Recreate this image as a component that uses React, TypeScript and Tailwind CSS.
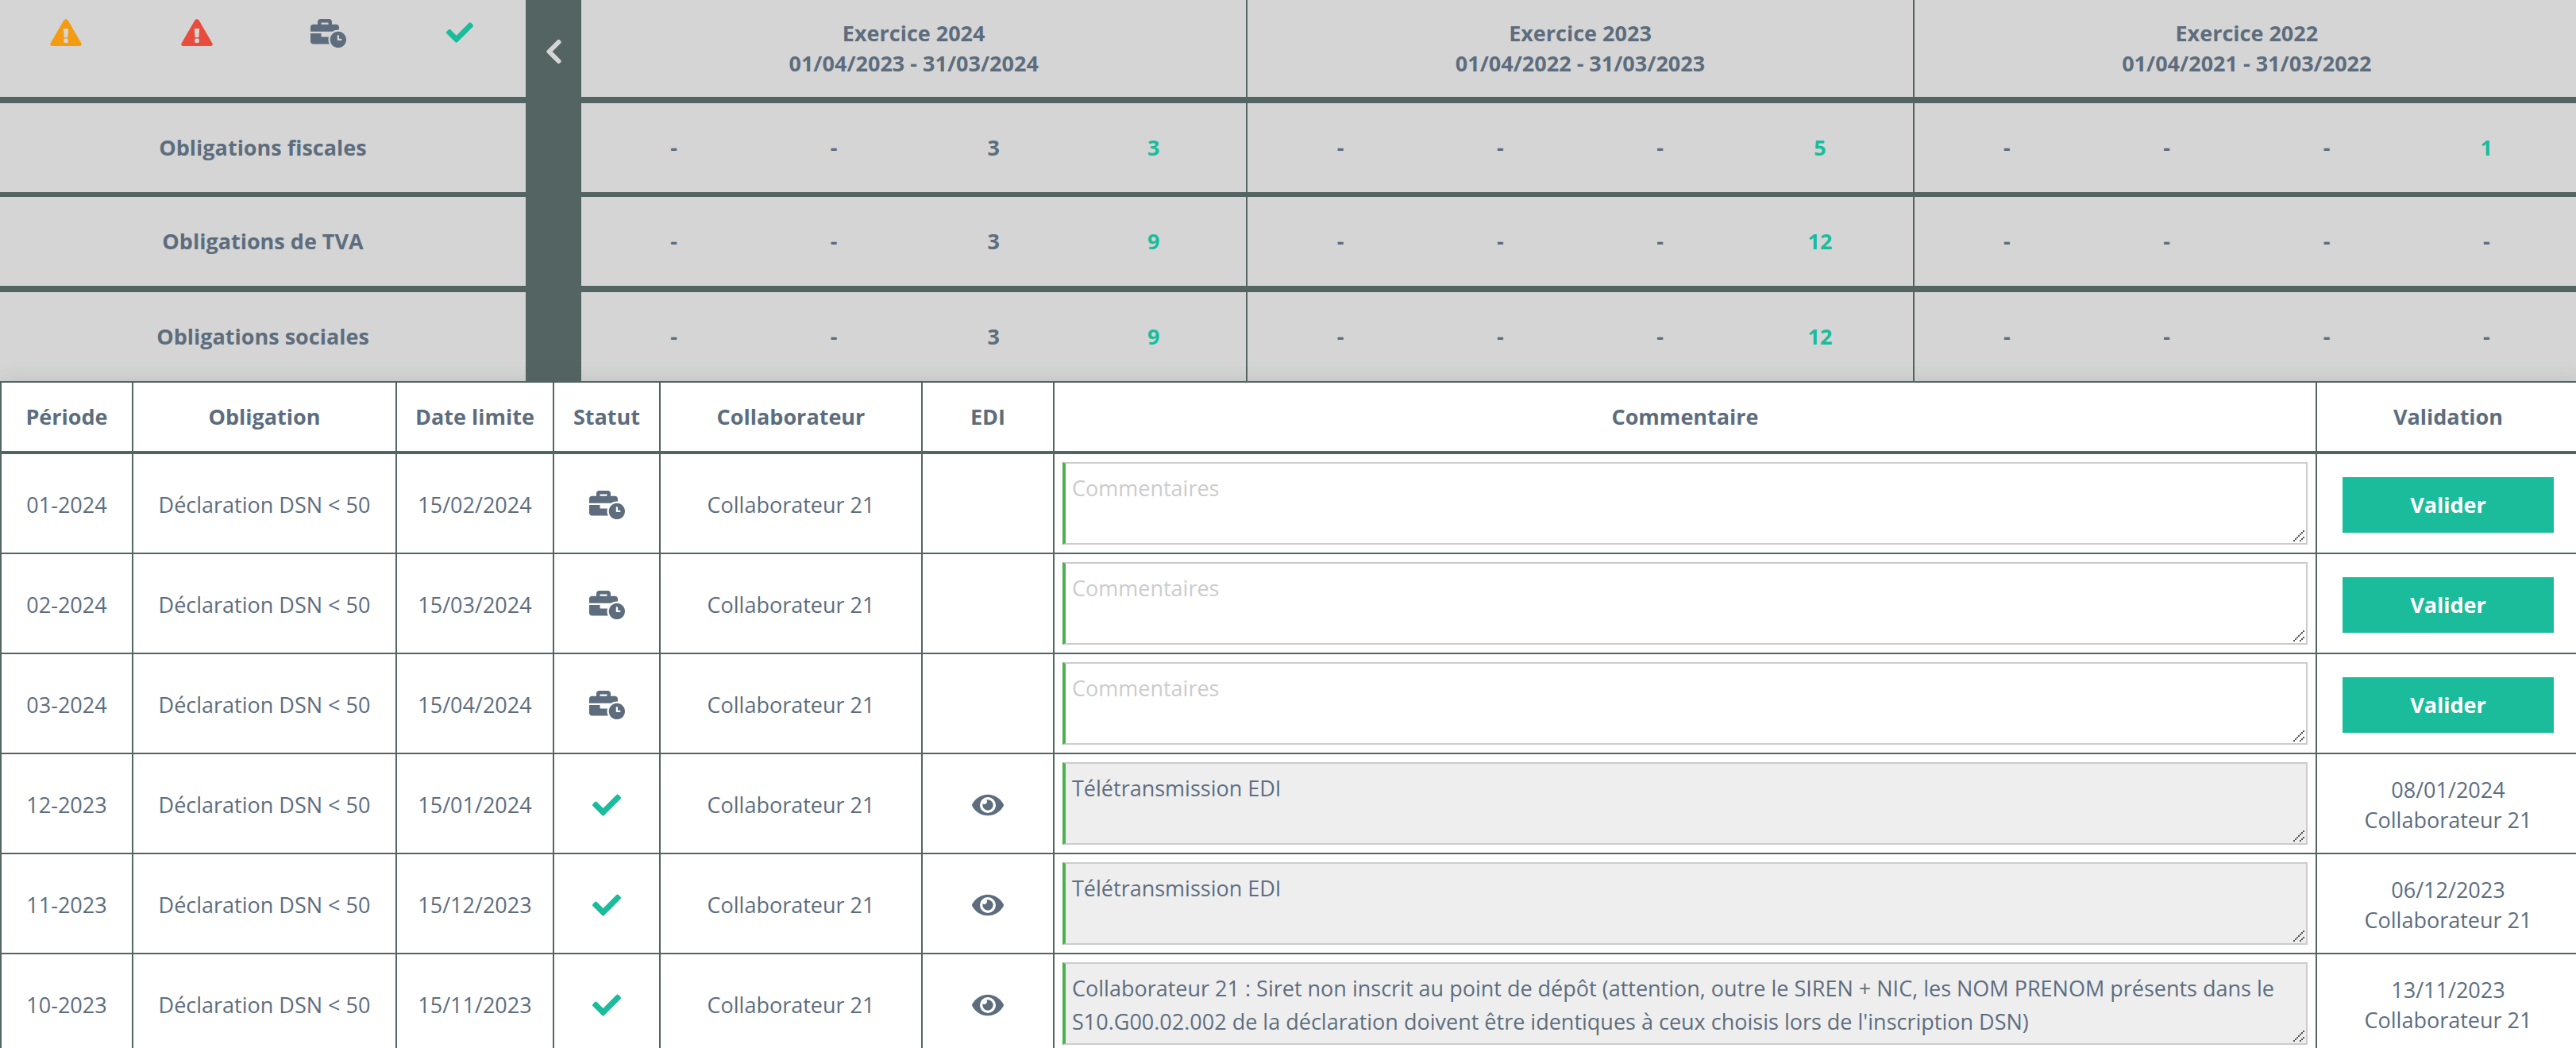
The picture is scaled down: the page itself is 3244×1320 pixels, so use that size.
import React, { useState } from 'react';
import { FaBusinessTime, FaCheck, FaEye } from 'react-icons/fa';

const EXERCICES = [
  { annee: '2024', dates: '01/04/2023 - 31/03/2024' },
  { annee: '2023', dates: '01/04/2022 - 31/03/2023' },
  { annee: '2022', dates: '01/04/2021 - 31/03/2022' }
];

// counters per exercice: retard, urgent, en cours, fait
const SYNTHESE = [
  {
    label: 'Obligations fiscales',
    border: 'border-b-6',
    counts: [['-', '-', '3', '3'], ['-', '-', '-', '5'], ['-', '-', '-', '1']]
  },
  {
    label: 'Obligations de TVA',
    border: 'border-b-8',
    counts: [['-', '-', '3', '9'], ['-', '-', '-', '12'], ['-', '-', '-', '-']]
  },
  {
    label: 'Obligations sociales',
    border: '',
    counts: [['-', '-', '3', '9'], ['-', '-', '-', '12'], ['-', '-', '-', '-']]
  }
];

interface Declaration {
  periode: string;
  limite: string;
  commentaire?: string;
  valideLe?: string;
}

const DECLARATIONS: Declaration[] = [
  { periode: '01-2024', limite: '15/02/2024' },
  { periode: '02-2024', limite: '15/03/2024' },
  { periode: '03-2024', limite: '15/04/2024' },
  { periode: '12-2023', limite: '15/01/2024', commentaire: 'Télétransmission EDI', valideLe: '08/01/2024' },
  { periode: '11-2023', limite: '15/12/2023', commentaire: 'Télétransmission EDI', valideLe: '06/12/2023' },
  {
    periode: '10-2023',
    limite: '15/11/2023',
    commentaire: "Collaborateur 21 : Siret non inscrit au point de dépôt (attention, outre le SIREN + NIC, les NOM PRENOM présents dans le S10.G00.02.002 de la déclaration doivent être identiques à ceux choisis lors de l'inscription DSN)",
    valideLe: '13/11/2023'
  }
];

const COLLABORATEUR = 'Collaborateur 21';

const Warning = ({ className }: { className: string }) => (
  <svg className={`w-10 h-[34px] ${className}`} viewBox="0 0 40 34" fill="currentColor" fillRule="evenodd">
    <path d="M17.4 1.6Q20 -1.6 22.6 1.6L39.4 30.6Q40.6 34 37.4 34H2.6Q-.6 34 .6 30.6ZM16.8 12L17.6 23H22.4L23.2 12ZM20 24.2A3 3 0 1 0 20 30.2A3 3 0 1 0 20 24.2Z" />
  </svg>
);

const Chevron = () => (
  <svg className="w-9 h-9" viewBox="0 0 36 36" fill="none" stroke="currentColor" strokeWidth="6" strokeLinecap="round" strokeLinejoin="round">
    <path d="M24.5 5L12.5 17L24.5 29" />
  </svg>
);

const Grip = () => (
  <svg className="absolute right-1 bottom-1 w-3.5 h-3.5 pointer-events-none" viewBox="0 0 7 7" shapeRendering="crispEdges" fill="#555">
    {[0, 1, 2, 3, 4, 5, 6].map(i => <rect key={i} x={i} y={6 - i} width="1" height="1" />)}
    {[4, 5, 6].map(i => <rect key={i} x={i} y={10 - i} width="1" height="1" />)}
  </svg>
);

const Synthese = () => {
  const [open, setOpen] = useState(true);

  return (
    <section className="flex bg-[#d5d5d5] font-bold">
      <div className="w-[662px] shrink-0">
        <div className="h-[130px] pt-6 grid grid-cols-4 justify-items-center items-start border-b-8 border-[#546462]">
          <Warning className="text-[#f39c12]" />
          <Warning className="text-[#e74c3c]" />
          <FaBusinessTime className="w-[45px] h-9" />
          <FaCheck className="w-9 h-[34px] text-[#1abc9c]" />
        </div>
        {SYNTHESE.map(row => (
          <div key={row.label} className={`box-content h-28 flex items-center justify-center border-[#546462] ${row.border}`}>
            {row.label}
          </div>
        ))}
      </div>

      <button
        type="button"
        aria-label="Replier"
        aria-expanded={open}
        onClick={() => setOpen(!open)}
        className="w-[70px] shrink-0 pt-12 flex items-start justify-center bg-[#546462] text-[#d5d5d5]"
      >
        <Chevron />
      </button>

      <div className="flex-1 min-w-0 grid grid-cols-3">
        {EXERCICES.map((ex, i) => (
          <div key={ex.annee} className="border-r-2 border-[#546462]">
            <div className="h-[130px] flex flex-col items-center justify-center border-b-8 border-[#546462]">
              <span>Exercice {ex.annee}</span>
              <span>{ex.dates}</span>
            </div>
            {SYNTHESE.map(row => (
              <div key={row.label} className={`box-content h-28 px-4 grid grid-cols-4 items-center text-center border-[#546462] ${row.border}`}>
                {row.counts[i].map((n, j) => (
                  <span key={j} className={j === 3 && n !== '-' ? 'text-[#1abc9c]' : ''}>{n}</span>
                ))}
              </div>
            ))}
          </div>
        ))}
      </div>
    </section>
  );
};

const Ligne = ({ declaration }: { declaration: Declaration }) => {
  const { periode, limite, commentaire, valideLe } = declaration;
  const [texte, setTexte] = useState(commentaire || '');
  const fait = Boolean(valideLe);
  const info = 'p-0 pt-1 border-r-2 border-b-2 border-[#546462]';

  return (
    <tr className="h-[126px]">
      <td className={info}>{periode}</td>
      <td className={info}>Déclaration DSN &lt; 50</td>
      <td className={info}>{limite}</td>
      <td className={info}>
        {fait
          ? <FaCheck className="w-9 h-9 mx-auto text-[#1abc9c]" />
          : <FaBusinessTime className="w-[45px] h-9 mx-auto" />}
      </td>
      <td className={info}>{COLLABORATEUR}</td>
      <td className={info}>
        {fait && <button type="button" aria-label="Voir l'EDI" className="block mx-auto"><FaEye className="w-10 h-9" /></button>}
      </td>
      <td className="p-0 border-r-2 border-b-2 border-[#546462]">
        <div className="relative mx-2.5">
          <textarea
            aria-label={`Commentaire ${periode}`}
            placeholder="Commentaires"
            value={texte}
            readOnly={fait}
            onChange={(e) => setTexte(e.target.value)}
            className={`block w-full h-[104px] pt-2.5 px-2 text-left leading-[42px] resize-none overflow-hidden outline-none border-2 border-l-4 border-[#ccc] border-l-[#4caf50] placeholder:text-[#ccc] ${fait ? 'bg-[#eee]' : 'bg-white'}`}
          />
          <Grip />
        </div>
      </td>
      <td className={info}>
        {fait ? (
          <div>{valideLe}<br />{COLLABORATEUR}</div>
        ) : (
          <button type="button" className="block w-[266px] h-[70px] mx-auto bg-[#1abc9c] text-white font-bold">Valider</button>
        )}
      </td>
    </tr>
  );
};

export default function App() {
  return (
    <div className="overflow-hidden bg-white text-[#5d6d7e] text-[27px] leading-[38px] font-['Segoe_UI','Open_Sans','Noto_Sans',sans-serif]">
      {/* the sheet runs slightly past the right edge */}
      <div className="-mr-1.5">
        <Synthese />
        <table className="relative w-full table-fixed border-separate border-spacing-0 border-t-2 border-l-2 border-[#546462] bg-white text-center shadow-[0_0_24px_rgba(84,100,98,0.2)]">
          <colgroup>
            <col className="w-[166px]" />
            <col className="w-[332px]" />
            <col className="w-[198px]" />
            <col className="w-[134px]" />
            <col className="w-[330px]" />
            <col className="w-[166px]" />
            <col />
            <col className="w-[332px]" />
          </colgroup>
          <thead>
            <tr className="h-[90px]">
              {['Période', 'Obligation', 'Date limite', 'Statut', 'Collaborateur', 'EDI', 'Commentaire', 'Validation'].map(h => (
                <th key={h} className="p-0 border-r-2 border-b-4 border-[#546462] font-bold">{h}</th>
              ))}
            </tr>
          </thead>
          <tbody>
            {DECLARATIONS.map(d => <Ligne key={d.periode} declaration={d} />)}
          </tbody>
        </table>
      </div>
    </div>
  );
}
